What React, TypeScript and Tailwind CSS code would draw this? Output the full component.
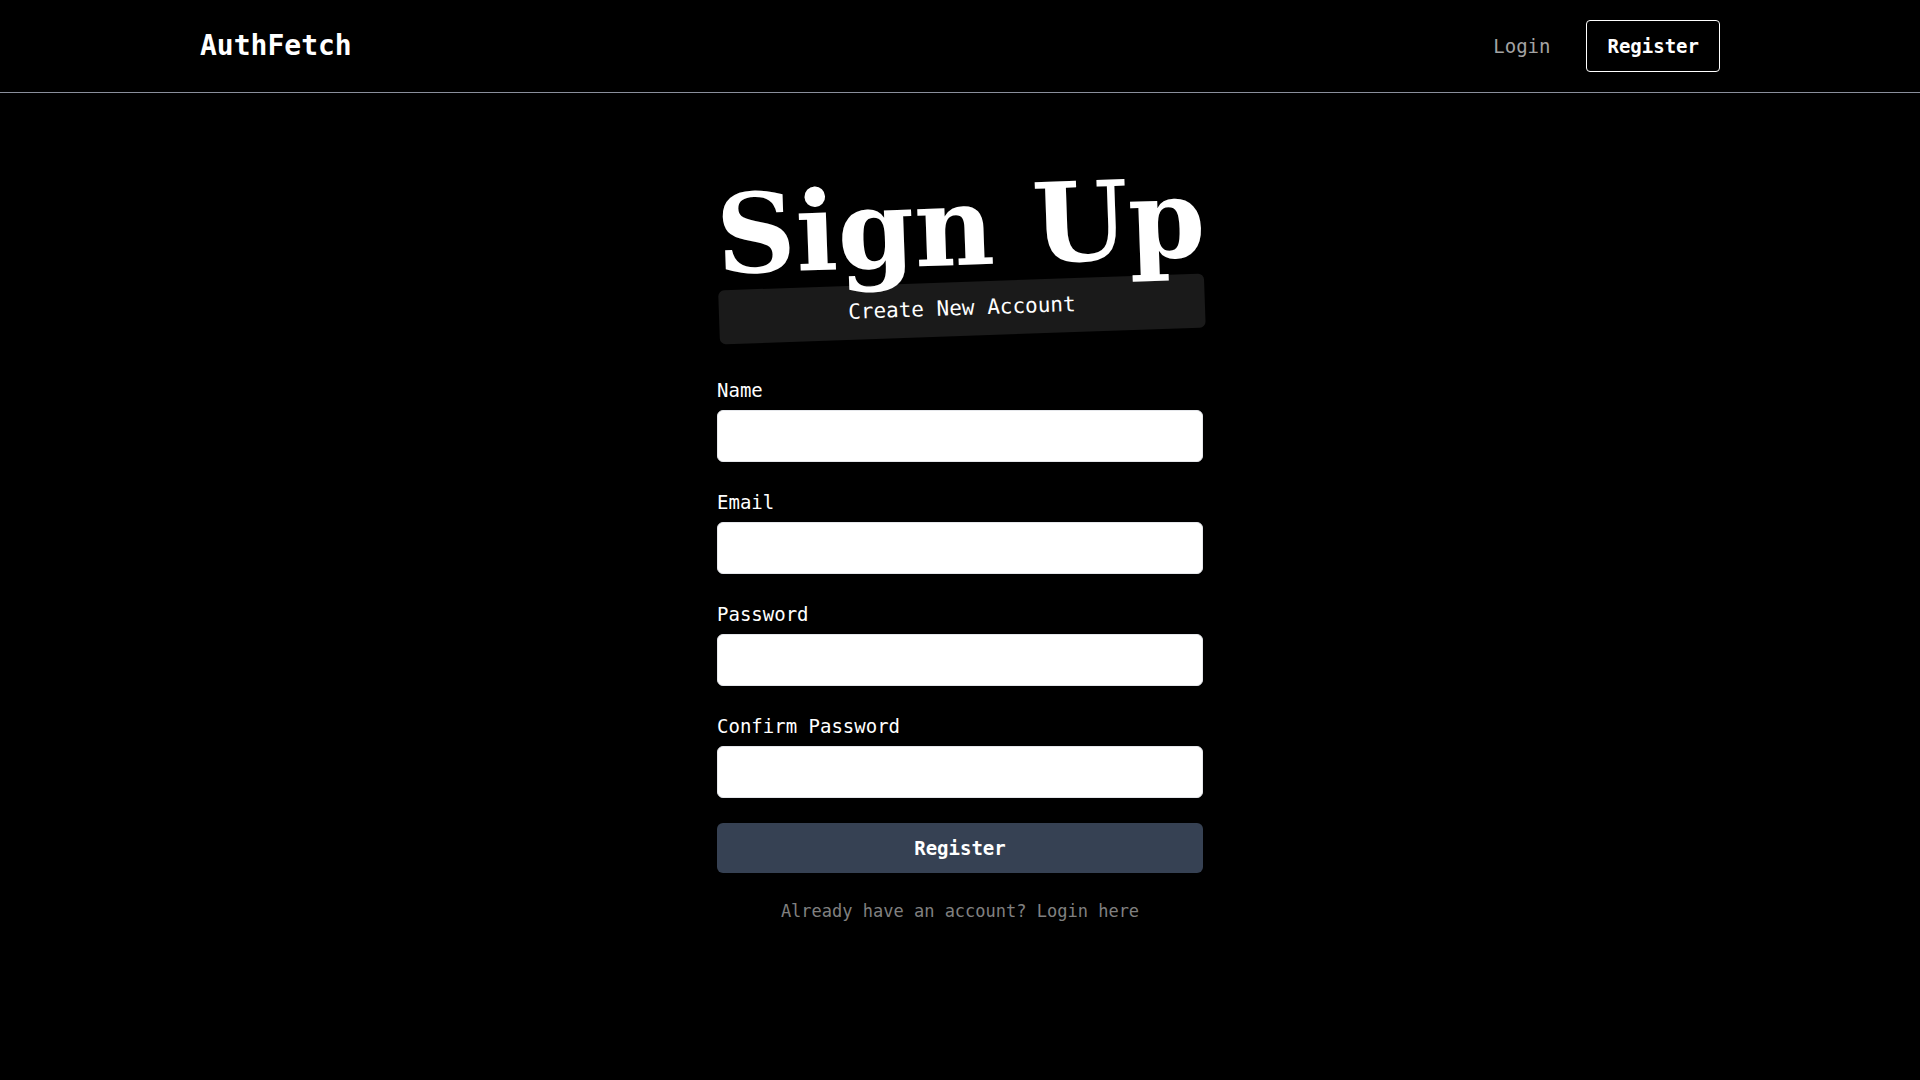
import React from 'react';

const mono = "font-['DejaVu_Sans_Mono','Liberation_Mono',monospace]";

const fields = [
  { id: 'name', label: 'Name', type: 'text' },
  { id: 'email', label: 'Email', type: 'email' },
  { id: 'password', label: 'Password', type: 'password' },
  { id: 'confirm', label: 'Confirm Password', type: 'password' },
];

const Navbar: React.FC = () => (
  <header className="h-[93px] border-b border-[#8a8f9c]">
    <div className="flex h-full items-center justify-between px-[200px]">
      <a href="#" className="text-[28px] font-bold text-white">
        AuthFetch
      </a>
      <nav className="flex items-center gap-9">
        <a href="#" className="text-[19px] text-[#a3a3a3]">
          Login
        </a>
        <a
          href="#"
          className="flex h-[52px] items-center rounded border border-white px-5 text-[19px] font-bold text-white"
        >
          Register
        </a>
      </nav>
    </div>
  </header>
);

export default function App() {
  return (
    <div className={`min-h-screen bg-black ${mono}`}>
      <Navbar />

      <main className="flex justify-center">
        <div className="w-[486px] pt-[79px]">
          {/* Heading */}
          <div className="-rotate-2">
            <h1 className="whitespace-nowrap text-center font-['DejaVu_Serif',serif] text-[110px] font-bold leading-none text-white">
              Sign Up
            </h1>
            <div className="flex h-[54px] items-center justify-center rounded-md bg-[#1a1a1a]">
              <span className="text-[21px] text-white">Create New Account</span>
            </div>
          </div>

          {/* Form */}
          <form className="mt-[40px] flex flex-col gap-[26px]" onSubmit={(e) => e.preventDefault()}>
            {fields.map((f) => (
              <div key={f.id} className="flex flex-col">
                <label htmlFor={f.id} className="mb-[6px] text-[19px] leading-[28px] text-white">
                  {f.label}
                </label>
                <input
                  id={f.id}
                  type={f.type}
                  className="h-[52px] w-full rounded-md border border-gray-200 bg-white px-3 text-black outline-none"
                />
              </div>
            ))}
            <button
              type="submit"
              className="-mt-px h-[50px] w-full rounded-md bg-gray-700 text-[19px] font-bold text-white"
            >
              Register
            </button>
          </form>

          <p className="mt-[26px] text-center text-[17px] text-[#808080]">
            Already have an account? <a href="#">Login here</a>
          </p>
        </div>
      </main>
    </div>
  );
}
